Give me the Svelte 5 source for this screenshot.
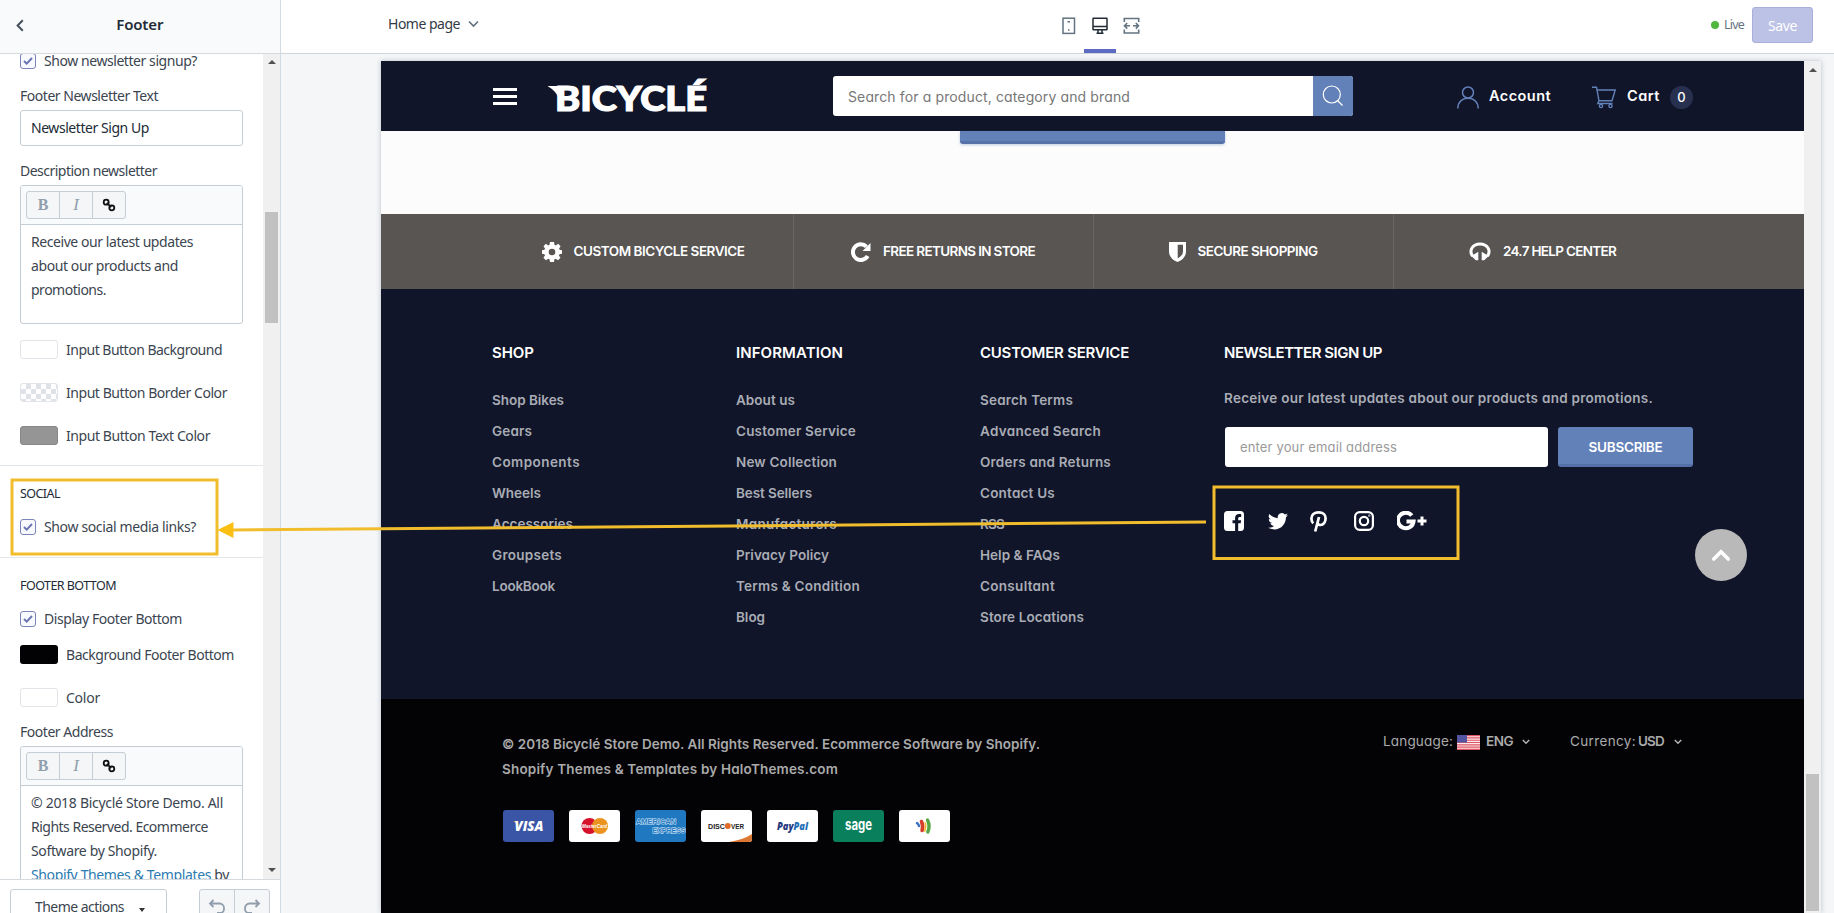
<script>
  const services = [
    { icon: 'gear', label: 'CUSTOM BICYCLE SERVICE', w: 171 },
    { icon: 'redo', label: 'FREE RETURNS IN STORE', w: 152 },
    { icon: 'shield', label: 'SECURE SHOPPING', w: 120 },
    { icon: 'phones', label: '24.7 HELP CENTER', w: 113 }
  ];

  const columns = [
    {
      title: 'SHOP', w: 42,
      links: [['Shop Bikes', 72], ['Gears', 40], ['Components', 88], ['Wheels', 49], ['Accessories', 81], ['Groupsets', 70], ['LookBook', 63]]
    },
    {
      title: 'INFORMATION', w: 107,
      links: [['About us', 59], ['Customer Service', 120], ['New Collection', 101], ['Best Sellers', 76], ['Manufacturers', 101], ['Privacy Policy', 93], ['Terms & Condition', 124], ['Blog', 29]]
    },
    {
      title: 'CUSTOMER SERVICE', w: 149,
      links: [['Search Terms', 93], ['Advanced Search', 121], ['Orders and Returns', 131], ['Contact Us', 75], ['RSS', 24], ['Help & FAQs', 80], ['Consultant', 75], ['Store Locations', 104]]
    }
  ];

  // Tracks the letters of a label so that it takes the given width.
  function fit(node, width) {
    const range = document.createRange();
    range.selectNodeContents(node);
    const natural = range.getBoundingClientRect().width;
    const count = node.textContent.length;
    node.style.letterSpacing = `${((width - natural) / count).toFixed(3)}px`;
  }
</script>

{#snippet check(label, w)}
  <div class="check">
    <span class="box">
      <svg width="10" height="8" viewBox="0 0 10 8"><path d="M1 4l2.700 2.600L9 1" fill="none" stroke="#6a76b4" stroke-width="2" /></svg>
    </span>
    <span use:fit={w}>{label}</span>
  </div>
{/snippet}

{#snippet swatch(kind, label, w)}
  <div class="swatch-row"><span class="swatch {kind}"></span><span use:fit={w}>{label}</span></div>
{/snippet}

{#snippet tools()}
  <div class="tools">
    <div class="group">
      <span class="bold">B</span><span class="ital">I</span>
      <span>
        <svg width="14" height="14" viewBox="0 0 14 14" fill="none" stroke="#111" stroke-width="1.800"><circle cx="4.200" cy="4.200" r="2.500" /><circle cx="9.800" cy="9.800" r="2.500" /><path d="M4.800 4.800l4.400 4.400" /></svg>
      </span>
    </div>
  </div>
{/snippet}

{#snippet chevron()}
  <svg class="chev" width="8" height="6" viewBox="0 0 8 6"><path d="M.8 1l3.200 3.200L7.200 1" fill="none" stroke="#b5b5b5" stroke-width="1.500" /></svg>
{/snippet}

<div class="app">
  <aside>
    <header class="side-head">
      <svg width="8" height="13" viewBox="0 0 8 13"><path d="M6.800 1.200L1.600 6.500l5.200 5.300" fill="none" stroke="#454f5b" stroke-width="2" /></svg>
      <h1><span use:fit={47}>Footer</span></h1>
    </header>

    <div class="side-body">
      <div class="panel">
        <section class="first">
          {@render check('Show newsletter signup?', 153)}
          <div class="label"><span use:fit={138}>Footer Newsletter Text</span></div>
          <div class="input"><span use:fit={118}>Newsletter Sign Up</span></div>
          <div class="label"><span use:fit={137}>Description newsletter</span></div>
          <div class="rte">
            {@render tools()}
            <div class="copy">
              <div><span use:fit={162}>Receive our latest updates</span></div>
              <div><span use:fit={147}>about our products and</span></div>
              <div><span use:fit={75}>promotions.</span></div>
            </div>
          </div>
          <div class="swatches">
            {@render swatch('white', 'Input Button Background', 156)}
            {@render swatch('clear', 'Input Button Border Color', 161)}
            {@render swatch('grey', 'Input Button Text Color', 144)}
          </div>
        </section>
        <section class="social">
          <h2><span use:fit={40}>SOCIAL</span></h2>
          {@render check('Show social media links?', 152)}
        </section>
        <section class="bottom">
          <h2><span use:fit={96}>FOOTER BOTTOM</span></h2>
          {@render check('Display Footer Bottom', 138)}
          <div class="swatches">
            {@render swatch('black', 'Background Footer Bottom', 168)}
            {@render swatch('white', 'Color', 34)}
          </div>
          <div class="label address"><span use:fit={93}>Footer Address</span></div>
          <div class="rte tall">
            {@render tools()}
            <div class="copy">
              <div><span use:fit={192}>© 2018 Bicyclé Store Demo. All</span></div>
              <div><span use:fit={177}>Rights Reserved. Ecommerce</span></div>
              <div><span use:fit={126}>Software by Shopify.</span></div>
              <div><span use:fit={198}><a>Shopify Themes &amp; Templates</a> by</span></div>
            </div>
          </div>
        </section>
      </div>
      <div class="scroll side-scroll">
        <i class="up"></i><b></b><i class="down"></i>
      </div>
    </div>

    <footer class="side-foot">
      <div class="theme"><span use:fit={89}>Theme actions</span><i></i></div>
      <div class="history">
        <span><svg width="18" height="18" viewBox="0 0 18 18" fill="none" stroke="#919eab" stroke-width="1.800"><path d="M5.500 1L2 4.500 5.500 8M2.500 4.500h9a4.500 4.500 0 0 1 4.500 4.500v1a4 4 0 0 1-4 4H9" /></svg></span>
        <span><svg width="18" height="18" viewBox="0 0 18 18" fill="none" stroke="#919eab" stroke-width="1.800"><path d="M12.500 1L16 4.500 12.500 8M15.500 4.500h-9A4.500 4.500 0 0 0 2 9v1a4 4 0 0 0 4 4h3" /></svg></span>
      </div>
    </footer>
  </aside>

  <main>
    <div class="topbar">
      <div class="page-pick">
        <span use:fit={72}>Home page</span>
        <svg width="11" height="8" viewBox="0 0 11 8"><path d="M1 1.500l4.500 4.500L10 1.500" fill="none" stroke="#637381" stroke-width="1.700" /></svg>
      </div>
      <div class="devices">
        <span><svg width="14" height="18" viewBox="0 0 14 18" fill="none" stroke="#637381" stroke-width="1.500"><rect x="1" y="1.200" width="11.500" height="15.200" /><path d="M5.500 4.700h2.500M6 13h1.500" /></svg></span>
        <span class="on"><svg width="16" height="18" viewBox="0 0 16 18" fill="none" stroke="#212b36" stroke-width="1.500"><rect x="1" y="1.200" width="14" height="11.600" rx=".5" /><path d="M1 9.500h14M6 13v3M10 13v3M4.500 16.200h7" /></svg></span>
        <span><svg width="17" height="18" viewBox="0 0 17 18" fill="none" stroke="#637381" stroke-width="1.600"><path d="M1.300 5V1.500h14.400V5M1.300 12.500V16h14.400v-3.500M7 8.800H1.500M4.200 6L1.500 8.800l2.700 2.800M10 8.800h5.500M12.800 6l2.700 2.800-2.700 2.800" /></svg></span>
      </div>
      <div class="status"><i></i><span use:fit={20}>Live</span><button><span use:fit={29}>Save</span></button></div>
    </div>

    <div class="frame">
      <div class="store">
        <div class="store-head">
          <div class="burger"><i></i><i></i><i></i></div>
          <svg class="logo" width="162" height="42" viewBox="0 0 162 42">
            <path d="M-.5 12h16v12h-5Q8 17 -.5 12z" fill="#fff" />
            <text x="7" y="36.700" textLength="152" lengthAdjust="spacingAndGlyphs">BICYCLÉ</text>
          </svg>
          <div class="search">
            <div><span use:fit={282}>Search for a product, category and brand</span></div>
            <b><svg width="22" height="22" viewBox="0 0 22 22" fill="none" stroke="#fff" stroke-width="1.200"><circle cx="9.800" cy="9.500" r="8.500" /><path d="M15.500 15.500l5 5" /></svg></b>
          </div>
          <div class="account">
            <svg width="22" height="23" viewBox="0 0 22 23" fill="none" stroke="#6381b9" stroke-width="1.500"><circle cx="11" cy="6.500" r="5.500" /><path d="M.8 22.500C.8 16 5 12.200 11 12.200S21.200 16 21.200 22.500" /></svg>
            <span use:fit={62}>Account</span>
          </div>
          <div class="cart">
            <svg width="24" height="23" viewBox="0 0 24 23" fill="none" stroke="#6381b9" stroke-width="1.400"><path d="M0 1.200h4.500L7 14.800h13L23.200 4H5M7 14.800l-1.200 2.700h14.700" /><circle cx="9" cy="20" r="1.600" /><circle cx="18.500" cy="20" r="1.600" /></svg>
            <span use:fit={33}>Cart</span>
            <b>0</b>
          </div>
        </div>

        <div class="gap"><div class="cta"></div></div>

        <div class="services">
          {#each services as s}
            <div class="service">
              {#if s.icon === 'gear'}
                <svg width="20" height="20" viewBox="0 0 20 20"><path fill="#fff" fill-rule="evenodd" d="M8 0h4l.5 2.800 1.300.6L16.200 1.800l2.400 2.500-1.500 2.300.5 1.200 2.400.4v3.600l-2.500.5-.6 1.300 1.600 2.200-2.500 2.500-2.300-1.500-1.300.5L12 20H8l-.5-2.700-1.300-.5-2.300 1.500-2.500-2.500L3 13.600l-.6-1.300L0 11.800V8.200l2.500-.5.5-1.200-1.500-2.200 2.400-2.500 2.300 1.600 1.300-.6zM10 6.700a3.300 3.300 0 1 0 0 6.600a3.300 3.300 0 1 0 0-6.600z" /></svg>
              {:else if s.icon === 'redo'}
                <svg width="20" height="20" viewBox="0 0 20 20"><path d="M16.700 14A7.900 7.900 0 1 1 15.500 4.600" fill="none" stroke="#fff" stroke-width="4" /><path d="M19.500 1v8h-8z" fill="#fff" /></svg>
              {:else if s.icon === 'shield'}
                <svg width="17" height="20" viewBox="0 0 17 20"><path fill="#fff" fill-rule="evenodd" d="M0 0h17v9.500Q17 16.500 8.500 20 0 16.500 0 9.500zM8.700 2.800v13.600q5.300-2.700 5.300-7V2.800z" /></svg>
              {:else}
                <svg width="22" height="20" viewBox="0 0 22 20"><path d="M3.600 14.200C-.6 8 4 1.900 11 1.900S22.600 8 18.400 14.200" fill="none" stroke="#fff" stroke-width="3" /><path d="M9.300 9.800v8.400H6.800L2.300 14zM12.700 9.800v8.400h2.500l4.500-4.200z" fill="#fff" /></svg>
              {/if}
              <span use:fit={s.w}>{s.label}</span>
            </div>
          {/each}
        </div>

        <div class="foot-main">
          {#each columns as col}
            <div class="col">
              <h3><span use:fit={col.w}>{col.title}</span></h3>
              <ul>
                {#each col.links as [text, w]}
                  <li><span use:fit={w}>{text}</span></li>
                {/each}
              </ul>
            </div>
          {/each}
          <div class="news">
            <h3><span use:fit={158}>NEWSLETTER SIGN UP</span></h3>
            <p><span use:fit={429}>Receive our latest updates about our products and promotions.</span></p>
            <div class="form">
              <div class="email"><span use:fit={157}>enter your email address</span></div>
              <div class="subscribe"><span use:fit={74}>SUBSCRIBE</span></div>
            </div>
            <div class="icons">
              <svg width="20" height="20" viewBox="0 0 20 20"><path fill="#fff" d="M3.500 0h13A3.500 3.500 0 0 1 20 3.500v13a3.500 3.500 0 0 1-3.500 3.500h-2.300v-7.700h2.500l.4-3h-2.900V7.400c0-.9.300-1.500 1.500-1.500h1.500V3.200c-.3 0-1.200-.1-2.200-.1-2.300 0-3.900 1.400-3.900 3.900v2.300H8.500v3h2.600V20H3.500A3.500 3.500 0 0 1 0 16.500v-13A3.500 3.500 0 0 1 3.500 0z" /></svg>
              <svg class="tw" width="20" height="17" viewBox="0 0 24 20"><path fill="#fff" d="M24 2.300a9.800 9.800 0 0 1-2.800.8 4.900 4.900 0 0 0 2.100-2.700 9.900 9.900 0 0 1-3.100 1.200 4.900 4.900 0 0 0-8.400 4.500A14 14 0 0 1 1.700.9a4.900 4.900 0 0 0 1.500 6.600A4.900 4.900 0 0 1 1 6.900v.1a4.900 4.900 0 0 0 3.900 4.800 4.900 4.900 0 0 1-2.200.1 4.900 4.900 0 0 0 4.600 3.400A9.900 9.900 0 0 1 0 17.300a13.900 13.900 0 0 0 7.500 2.200c9.100 0 14-7.500 14-14v-.6A10 10 0 0 0 24 2.300z" /></svg>
              <svg class="pin" width="17" height="21" viewBox="0 0 17 21"><path fill="none" stroke="#fff" stroke-width="2.700" d="M3.300 12.200C1.800 11 1.400 9.400 1.400 7.600 1.400 3.900 4.200 1.400 8.700 1.400c4.300 0 6.900 2.500 6.900 5.800 0 4-2.300 6.800-5 6.800-1.600 0-2.800-.9-3-2M9 6L5.200 20.500" /></svg>
              <svg class="insta" width="20" height="20" viewBox="0 0 20 20" fill="none" stroke="#fff" stroke-width="2.200"><rect x="1.100" y="1.100" width="17.800" height="17.800" rx="4.600" /><circle cx="10" cy="10" r="4.200" /><circle cx="15.300" cy="4.700" r=".3" stroke-width="1.600" /></svg>
              <svg class="gplus" width="30" height="20" viewBox="0 0 30 20" fill="none" stroke="#fff" stroke-width="4"><path d="M14.800 4.500A7.800 7.800 0 1 0 16.500 10.600H9.500" /><path d="M20.500 10h9M25 5.500v9" stroke-width="3" /></svg>
            </div>
          </div>
        </div>

        <div class="foot-end">
          <div class="legal">
            <p><span use:fit={538}>© 2018 Bicyclé Store Demo. All Rights Reserved. Ecommerce Software by Shopify.</span></p>
            <p><span use:fit={336}>Shopify Themes &amp; Templates by HaloThemes.com</span></p>
            <div class="cards">
              <svg viewBox="0 0 51 32"><rect width="51" height="32" rx="3" fill="#3a55a5" /><path d="M10.500 11h4l1.500 5z" fill="#e8a33d" /><text x="11.500" y="21" textLength="29" lengthAdjust="spacingAndGlyphs" class="visa">VISA</text></svg>
              <svg viewBox="0 0 51 32"><rect width="51" height="32" rx="3" fill="#fff" /><circle cx="20.500" cy="16" r="8" fill="#d5112b" /><circle cx="31" cy="16" r="8" fill="#ea931f" /><text x="13" y="18.200" textLength="25" lengthAdjust="spacingAndGlyphs" class="mc">MasterCard</text></svg>
              <svg viewBox="0 0 51 32"><rect width="51" height="32" rx="3" fill="#1f78c0" /><text x="1" y="14.300" textLength="40" lengthAdjust="spacingAndGlyphs" class="amex">AMERICAN</text><text x="17.500" y="23" textLength="33" lengthAdjust="spacingAndGlyphs" class="amex">EXPRESS</text></svg>
              <svg viewBox="0 0 51 32"><rect width="51" height="32" rx="3" fill="#fff" /><path d="M28 32q15-2.500 23-8v5a3 3 0 0 1-3 3z" fill="#dc7633" /><text x="7" y="19" textLength="17" lengthAdjust="spacingAndGlyphs" class="disc">DISC</text><circle cx="26.800" cy="16" r="2.900" fill="#e06a26" /><text x="30" y="19" textLength="13" lengthAdjust="spacingAndGlyphs" class="disc">VER</text></svg>
              <svg viewBox="0 0 51 32"><rect width="51" height="32" rx="3" fill="#fff" /><text x="10" y="19.500" textLength="31" lengthAdjust="spacingAndGlyphs" class="paypal"><tspan fill="#253b80">Pay</tspan><tspan fill="#1e6fb8">Pal</tspan></text></svg>
              <svg viewBox="0 0 51 32"><rect width="51" height="32" rx="3" fill="#0a7f5c" /><text x="12" y="19.700" textLength="27" lengthAdjust="spacingAndGlyphs" class="sage">sage</text></svg>
              <svg viewBox="0 0 51 32"><rect width="51" height="32" rx="3" fill="#fff" /><g fill="none" stroke-linecap="round"><path d="M18 13q1.600 1.200 2 3" stroke="#3b73c4" stroke-width="2.500" /><path d="M22.500 11.500q2 4.500.6 9" stroke="#d5402b" stroke-width="3.600" /><path d="M28.500 10q3 6 .3 12" stroke="#55a747" stroke-width="3.400" /><path d="M26.300 13q1 4-.5 8" stroke="#f3b928" stroke-width="1.600" /></g></svg>
            </div>
          </div>
          <div class="locale">
            <span class="key" use:fit={70}>Language:</span>
            <svg class="flag" width="23" height="15" viewBox="0 0 23 15"><rect width="23" height="15" fill="#fbe9e9" /><path d="M0 .6h23M0 2.900h23M0 5.200h23M0 7.500h23M0 9.800h23M0 12.100h23M0 14.400h23" stroke="#e05565" stroke-width="1.150" /><rect width="10" height="7.500" fill="#5455a0" /></svg>
            <b use:fit={27}>ENG</b>{@render chevron()}
            <span class="key cur" use:fit={66}>Currency:</span>
            <b class="usd" use:fit={26}>USD</b>{@render chevron()}
          </div>
        </div>

        <div class="to-top"><svg width="20" height="13" viewBox="0 0 20 13"><path d="M2.800 10L10 2.800 17.200 10" fill="none" stroke="#fff" stroke-width="3.600" stroke-linecap="round" /></svg></div>
      </div>
      <div class="scroll store-scroll"><i class="up"></i><b></b></div>
    </div>
  </main>

  <svg class="notes" width="1834" height="913" viewBox="0 0 1834 913" fill="none" stroke="#f2bd2c" stroke-width="3">
    <rect x="12" y="480" width="205" height="74" />
    <rect x="1214" y="487" width="244" height="71.500" />
    <path d="M232 530L1206 522" />
    <path d="M217.500 530l16-8v16z" fill="#fbbf14" stroke="none" />
  </svg>
</div>

<style>
  :global(body) { margin: 0; overflow: hidden; }
  .app, .app * { box-sizing: border-box; }
  .app {
    position: relative;
    display: flex;
    width: 1834px;
    height: 913px;
    overflow: hidden;
    background: #f4f6f8;
    color: #3b4550;
    font: 14px/20px "Noto Sans", "Open Sans", sans-serif;
    white-space: nowrap;
  }
  h1, h2, h3, p, ul { margin: 0; padding: 0; font-size: inherit; list-style: none; }
  svg { display: block; flex: none; }

  aside { display: flex; flex-direction: column; width: 281px; height: 913px; flex: none; background: #fff; border-right: 1px solid #d3dbe2; }
  .side-head { display: flex; align-items: center; height: 54px; padding: 0 16px 2px 15.500px; flex: none; background: #f9fafb; border-bottom: 1px solid #d5dade; }
  .side-head h1 { flex: 1; margin-right: 8px; text-align: center; font-size: 15px; font-weight: 600; color: #212b36; padding-bottom: 3px; }
  .side-body { display: flex; height: 825px; overflow: hidden; flex: none; }
  .panel { width: 263px; }
  section { padding: 0 20px; }
  .first { padding-bottom: 20px; margin-top: -3px; }
  .social { border-top: 1px solid #e1e6ea; padding-top: 18px; padding-bottom: 20px; }
  .bottom { border-top: 1px solid #e1e6ea; padding-top: 18px; }
  h2 { font-size: 12.500px; font-weight: 400; color: #212b36; margin-bottom: 13px; }
  .check { display: flex; align-items: center; gap: 8px; height: 20px; }
  .box { display: flex; align-items: center; justify-content: center; width: 16px; height: 16px; border: 1px solid #7c85b8; border-radius: 3px; background: #f8f9fd; }
  .label { margin-top: 15px; height: 20px; }
  .input { display: flex; align-items: center; height: 36px; margin-top: 4px; padding-left: 10px; width: 223px; border: 1px solid #c4cdd5; border-radius: 3px; color: #212b36; }
  .rte { width: 223px; height: 139px; margin-top: 4px; border: 1px solid #c4cdd5; border-radius: 3px; overflow: hidden; }
  .rte.tall { height: 170px; }
  .tools { height: 39px; padding: 5px; background: #f9fafb; border-bottom: 1px solid #c4cdd5; }
  .group { display: flex; width: 100px; height: 28px; border: 1px solid #c4cdd5; border-radius: 3px; background: #f4f6f8; }
  .group > span { flex: 1; display: flex; align-items: center; justify-content: center; font: 16px "Liberation Serif", serif; color: #919eab; }
  .group > span + span { border-left: 1px solid #c4cdd5; }
  .group .bold { font-weight: 700; }
  .group .ital { font-style: italic; font-size: 17px; }
  .copy { padding: 5px 0 0 10px; line-height: 24px; }
  .copy a { color: #2b7ab0; }
  .swatches { display: flex; flex-direction: column; gap: 24px; margin-top: 16px; }
  .swatch-row { display: flex; align-items: center; height: 19px; gap: 8px; }
  .swatch { width: 38px; height: 19px; border-radius: 3px; }
  .white { background: #fff; border: 1px solid #e1e5e9; }
  .grey { background: #959595; border: 1px solid #868686; }
  .black { background: #020204; }
  .clear { border: 1px solid #e1e5e9; background: repeating-conic-gradient(#dfe3e8 0 25%, #fff 0 50%) 0 0 / 10px 10px; }

  .scroll { display: flex; flex-direction: column; align-items: center; width: 17px; background: #f0f0f1; flex: none; }
  .scroll i { border: 4px solid transparent; flex: none; }
  .scroll .up { border-top: 0; border-bottom: 4px solid #505050; }
  .scroll .down { border-bottom: 0; border-top: 4px solid #505050; }
  .scroll b { width: 13px; background: #c1c1c1; }
  .side-scroll { padding-top: 6px; }
  .side-scroll b { height: 111px; margin: 148px 0 545px; flex: none; }
  .store-scroll { padding-top: 7px; }
  .store-scroll b { height: 137px; margin-top: 702px; }

  .side-foot { display: flex; justify-content: space-between; flex: 1; padding: 9px 10px 0; border-top: 1px solid #d5dade; height: 34px; overflow: hidden; }
  .theme { display: flex; align-items: center; gap: 15px; width: 157px; height: 36px; padding-left: 24px; border: 1px solid #c4cdd5; border-radius: 3px; flex: none; }
  .theme i { border: 3.500px solid transparent; border-top: 4px solid #333; border-bottom: 0; margin-top: 5px; }
  .history { display: flex; width: 71px; height: 36px; border: 1px solid #c4cdd5; border-radius: 3px; background: #f4f6f8; }
  .history span { flex: 1; display: flex; justify-content: center; padding-top: 9px; }
  .history span + span { border-left: 1px solid #c4cdd5; }

  main { flex: 1; min-width: 0; }
  .topbar { display: flex; align-items: center; justify-content: space-between; height: 54px; padding: 0 21px 0 107px; background: #fff; border-bottom: 1px solid #cfd5da; color: #333c46; }
  .page-pick { display: flex; align-items: center; gap: 8px; width: 636px; padding-bottom: 5px; }
  .devices { display: flex; align-self: stretch; margin-right: auto; margin-left: 29px; }
  .devices span { display: flex; justify-content: center; width: 31px; padding-top: 17px; }
  .devices .on { border-bottom: 4px solid #5c6ac4; width: 32px; }
  .status { display: flex; align-items: center; font-size: 12.500px; color: #637381; padding-bottom: 3px; }
  .status i { width: 8px; height: 8px; border-radius: 50%; background: #50b83c; margin-right: 5px; }
  button { width: 61px; height: 36px; margin-left: 8px; padding: 0; border: 1px solid #a9afdb; border-radius: 3px; background: #bcc1e6; color: #fff; font: 14px "Noto Sans", sans-serif; }

  .frame { display: flex; width: 1440px; height: 852px; margin: 7px 0 0 100px; box-shadow: 0 0 5px rgba(60, 70, 90, .3); }
  .store { position: relative; width: 1423px; height: 852px; font-family: Inter, "Open Sans", sans-serif; font-feature-settings: "cv11"; font-weight: 600; font-size: 13.500px; color: #a9acb5; background: #fcfcfc; }
  .store-head { display: flex; height: 70px; padding: 15px 0 0 112px; background: #101529; color: #fff; }
  .burger { display: flex; flex-direction: column; gap: 4px; width: 24px; padding-top: 12px; margin-right: 31px; }
  .burger i { height: 3px; background: #fff; }
  .logo { margin-top: -2px; margin-right: 123px; overflow: visible; }
  .logo text { font: 900 34px Lato, sans-serif; fill: #fff; stroke: #fff; stroke-width: 1.200px; }
  .search { display: flex; width: 520px; height: 40px; border-radius: 3px; overflow: hidden; background: #fff; color: #777; font-weight: 400; font-size: 14px; }
  .search div { flex: 1; padding: 11px 0 0 15px; }
  .search b { display: flex; align-items: center; justify-content: center; width: 40px; background: #6381b9; }
  .account, .cart { display: flex; align-items: center; height: 42px; font-size: 14.500px; }
  .account > span, .cart > span { margin-top: -2px; }
  .account { gap: 10px; margin-left: 104px; width: 135px; }
  .cart { gap: 11px; }
  .cart b { width: 23px; height: 23px; border-radius: 50%; background: #28304f; text-align: center; font: 500 13px/23px Inter, sans-serif; margin-left: -1px; }

  .gap { height: 83px; }
  .cta { width: 265px; height: 13px; margin-left: 579px; background: #6381b9; border-bottom: 3px solid #5671a8; border-radius: 0 0 3px 3px; box-shadow: 0 1px 3px rgba(99, 129, 185, .4); }

  .services { display: grid; grid-template-columns: repeat(4, 300px); height: 75px; padding-left: 113px; background: #585553; color: #fff; }
  .service { display: flex; align-items: center; justify-content: center; gap: 12px; padding-right: 1px; border-right: 1px solid #686563; }
  .service span { margin-top: -2px; }
  .service:last-child { border: 0; padding-right: 3px; }

  .foot-main { display: grid; grid-template-columns: 244px 244px 244px 469px; height: 410px; padding: 54px 0 0 111px; background: #101529; }
  h3 { font-size: 15px; font-weight: 600; color: #fff; height: 20px; }
  ul { padding-top: 22px; line-height: 31px; }
  .news p { height: 20px; margin-top: 25px; }
  .form { display: flex; gap: 10px; margin: 19px 0 0 1px; }
  .email { width: 323px; height: 40px; padding: 10px 0 0 15px; background: #fff; border-radius: 3px; font-size: 13px; font-weight: 400; color: #999; }
  .subscribe { width: 135px; height: 40px; padding-top: 10px; text-align: center; color: #fff; background: #6381b9; border-bottom: 3px solid #5671a8; border-radius: 3px; }
  .icons { display: flex; align-items: center; margin-top: 44px; height: 20px; }
  .tw { margin-left: 24px; }
  .pin { margin-left: 22px; }
  .insta { margin-left: 27px; }
  .gplus { margin-left: 23px; }

  .foot-end { display: flex; justify-content: space-between; height: 214px; padding: 0 122px 0 121px; background: #030306; color: #aaa; }
  .legal { padding-top: 33px; line-height: 25px; }
  .cards { display: flex; gap: 15px; margin: 28px 0 0 1px; }
  .cards svg { width: 51px; height: 32px; }
  .cards text { font-family: "Liberation Sans", sans-serif; }
  .cards .visa { font: italic 900 14px "Open Sans", sans-serif; fill: #fff; }
  .cards .mc { font-size: 5.500px; font-style: italic; font-weight: 700; fill: #fff; }
  .cards .amex { font-size: 8px; font-weight: 700; fill: #1f78c0; stroke: #d7ecfa; stroke-width: 1px; paint-order: stroke; }
  .cards .disc { font-size: 8px; font-weight: 700; fill: #222; }
  .cards .paypal { font: italic 800 10px "Open Sans", sans-serif; }
  .cards .sage { font: 700 15px Inter, sans-serif; fill: #fff; }
  .locale { display: flex; align-items: center; height: 20px; margin-top: 32px; }
  .key { font-weight: 400; width: 70px; margin-left: -1px; }
  .key.cur { width: 65px; margin-left: 40px; }
  .flag { margin: 2px 6px 0 4px; }
  .locale b { font-weight: 600; width: 26px; }
  .usd { margin-left: 3px; }
  .chev { margin: 1px 0 0 10px; }

  .to-top { position: absolute; left: 1314px; top: 468px; display: flex; align-items: center; justify-content: center; width: 52px; height: 52px; border-radius: 50%; background: #b9b9b9; }
  .notes { position: absolute; left: 0; top: 0; pointer-events: none; }
</style>
